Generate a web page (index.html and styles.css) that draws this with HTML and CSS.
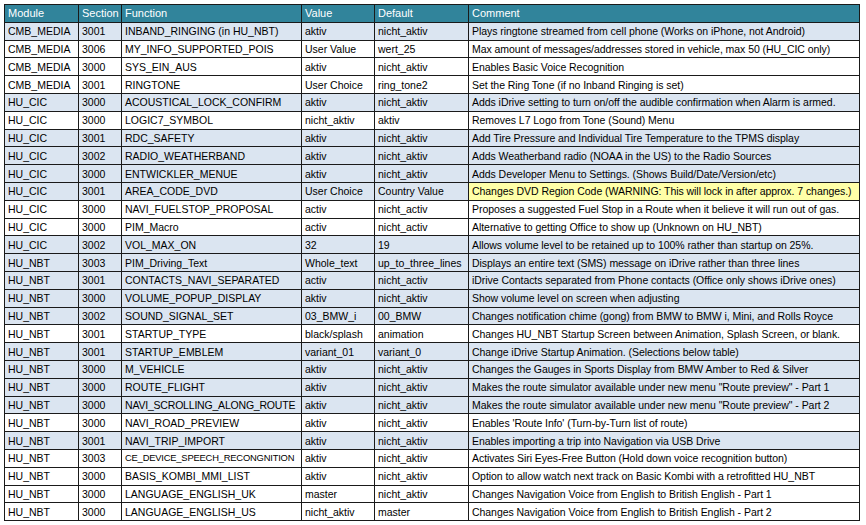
FILE: index.html
```html
<!DOCTYPE html>
<html>
<head>
<meta charset="utf-8">
<link rel="stylesheet" href="styles.css">
</head>
<body>
<table class="codes">
<colgroup>
<col class="c-mod"><col class="c-sec"><col class="c-fn"><col class="c-val"><col class="c-def"><col class="c-com">
</colgroup>
<thead>
<tr><th>Module</th><th>Section</th><th>Function</th><th>Value</th><th>Default</th><th>Comment</th></tr>
</thead>
<tbody>
<tr class="alt"><td>CMB_MEDIA</td><td>3001</td><td>INBAND_RINGING (in HU_NBT)</td><td>aktiv</td><td>nicht_aktiv</td><td>Plays ringtone streamed from cell phone (Works on iPhone, not Android)</td></tr>
<tr><td>CMB_MEDIA</td><td>3006</td><td>MY_INFO_SUPPORTED_POIS</td><td>User Value</td><td>wert_25</td><td>Max amount of messages/addresses stored in vehicle, max 50 (HU_CIC only)</td></tr>
<tr><td>CMB_MEDIA</td><td>3000</td><td>SYS_EIN_AUS</td><td>aktiv</td><td>nicht_aktiv</td><td>Enables Basic Voice Recognition</td></tr>
<tr><td>CMB_MEDIA</td><td>3001</td><td>RINGTONE</td><td>User Choice</td><td>ring_tone2</td><td>Set the Ring Tone (if no Inband Ringing is set)</td></tr>
<tr class="alt"><td>HU_CIC</td><td>3000</td><td>ACOUSTICAL_LOCK_CONFIRM</td><td>aktiv</td><td>nicht_aktiv</td><td>Adds iDrive setting to turn on/off the audible confirmation when Alarm is armed.</td></tr>
<tr><td>HU_CIC</td><td>3000</td><td>LOGIC7_SYMBOL</td><td>nicht_aktiv</td><td>aktiv</td><td>Removes L7 Logo from Tone (Sound) Menu</td></tr>
<tr class="alt"><td>HU_CIC</td><td>3001</td><td>RDC_SAFETY</td><td>aktiv</td><td>nicht_aktiv</td><td>Add Tire Pressure and Individual Tire Temperature to the TPMS display</td></tr>
<tr class="alt"><td>HU_CIC</td><td>3002</td><td>RADIO_WEATHERBAND</td><td>aktiv</td><td>nicht_aktiv</td><td>Adds Weatherband radio (NOAA in the US) to the Radio Sources</td></tr>
<tr class="alt"><td>HU_CIC</td><td>3000</td><td>ENTWICKLER_MENUE</td><td>aktiv</td><td>nicht_aktiv</td><td>Adds Developer Menu to Settings. (Shows Build/Date/Version/etc)</td></tr>
<tr class="alt"><td>HU_CIC</td><td>3001</td><td>AREA_CODE_DVD</td><td>User Choice</td><td>Country Value</td><td class="warn">Changes DVD Region Code (WARNING: This will lock in after approx. 7 changes.)</td></tr>
<tr><td>HU_CIC</td><td>3000</td><td>NAVI_FUELSTOP_PROPOSAL</td><td>activ</td><td>nicht_activ</td><td>Proposes a suggested Fuel Stop in a Route when it believe it will run out of gas.</td></tr>
<tr><td>HU_CIC</td><td>3000</td><td>PIM_Macro</td><td>activ</td><td>nicht_activ</td><td>Alternative to getting Office to show up (Unknown on HU_NBT)</td></tr>
<tr class="alt"><td>HU_CIC</td><td>3002</td><td>VOL_MAX_ON</td><td>32</td><td>19</td><td>Allows volume level to be retained up to 100% rather than startup on 25%.</td></tr>
<tr class="alt"><td>HU_NBT</td><td>3003</td><td>PIM_Driving_Text</td><td>Whole_text</td><td>up_to_three_lines</td><td>Displays an entire text (SMS) message on iDrive rather than three lines</td></tr>
<tr class="alt"><td>HU_NBT</td><td>3001</td><td>CONTACTS_NAVI_SEPARATED</td><td>activ</td><td>nicht_activ</td><td>iDrive Contacts separated from Phone contacts (Office only shows iDrive ones)</td></tr>
<tr class="alt"><td>HU_NBT</td><td>3000</td><td>VOLUME_POPUP_DISPLAY</td><td>aktiv</td><td>nicht_aktiv</td><td>Show volume level on screen when adjusting</td></tr>
<tr class="alt"><td>HU_NBT</td><td>3002</td><td>SOUND_SIGNAL_SET</td><td>03_BMW_i</td><td>00_BMW</td><td>Changes notification chime (gong) from BMW to BMW i, Mini, and Rolls Royce</td></tr>
<tr><td>HU_NBT</td><td>3001</td><td>STARTUP_TYPE</td><td>black/splash</td><td>animation</td><td>Changes HU_NBT Startup Screen between Animation, Splash Screen, or blank.</td></tr>
<tr class="alt"><td>HU_NBT</td><td>3001</td><td>STARTUP_EMBLEM</td><td>variant_01</td><td>variant_0</td><td>Change iDrive Startup Animation. (Selections below table)</td></tr>
<tr class="alt"><td>HU_NBT</td><td>3000</td><td>M_VEHICLE</td><td>aktiv</td><td>nicht_aktiv</td><td>Changes the Gauges in Sports Display from BMW Amber to Red &amp; Silver</td></tr>
<tr class="alt"><td>HU_NBT</td><td>3000</td><td>ROUTE_FLIGHT</td><td>aktiv</td><td>nicht_aktiv</td><td>Makes the route simulator available under new menu "Route preview" - Part 1</td></tr>
<tr class="alt"><td>HU_NBT</td><td>3000</td><td class="snug">NAVI_SCROLLING_ALONG_ROUTE</td><td>aktiv</td><td>nicht_aktiv</td><td>Makes the route simulator available under new menu "Route preview" - Part 2</td></tr>
<tr><td>HU_NBT</td><td>3000</td><td>NAVI_ROAD_PREVIEW</td><td>aktiv</td><td>nicht_aktiv</td><td>Enables 'Route Info' (Turn-by-Turn list of route)</td></tr>
<tr class="alt"><td>HU_NBT</td><td>3001</td><td>NAVI_TRIP_IMPORT</td><td>aktiv</td><td>nicht_aktiv</td><td>Enables importing a trip into Navigation via USB Drive</td></tr>
<tr><td>HU_NBT</td><td>3003</td><td class="tight">CE_DEVICE_SPEECH_RECONGNITION</td><td>aktiv</td><td>nicht_aktiv</td><td>Activates Siri Eyes-Free Button (Hold down voice recognition button)</td></tr>
<tr><td>HU_NBT</td><td>3000</td><td>BASIS_KOMBI_MMI_LIST</td><td>aktiv</td><td>nicht_aktiv</td><td>Option to allow watch next track on Basic Kombi with a retrofitted HU_NBT</td></tr>
<tr><td>HU_NBT</td><td>3000</td><td>LANGUAGE_ENGLISH_UK</td><td>master</td><td>nicht_aktiv</td><td>Changes Navigation Voice from English to British English - Part 1</td></tr>
<tr><td>HU_NBT</td><td>3000</td><td>LANGUAGE_ENGLISH_US</td><td>nicht_aktiv</td><td>master</td><td>Changes Navigation Voice from English to British English - Part 2</td></tr>
</tbody>
</table>
</body>
</html>
```

FILE: styles.css
```css
html, body {
  margin: 0;
  padding: 0;
  background: #ffffff;
}
body {
  font-family: "Liberation Sans", Arial, sans-serif;
  font-size: 10.5px;
  color: #000;
  overflow: hidden;
}
.codes {
  margin: 4px 0 0 4px;
  border-collapse: collapse;
  table-layout: fixed;
  width: 855px;
}
.c-mod { width: 74px; }
.c-sec { width: 43px; }
.c-fn  { width: 180px; }
.c-val { width: 73px; }
.c-def { width: 94px; }
.c-com { width: 391px; }
.codes tr { height: 17.8px; }
.codes th, .codes td {
  border: 1px solid #1a1a1a;
  padding: 0 0 0 3px;
  white-space: nowrap;
  overflow: hidden;
  text-align: left;
  vertical-align: middle;
  font-weight: normal;
  line-height: 12px;
}
.codes th {
  background: #31849b;
  color: #ffffff;
  font-size: 11px;
}
.codes td:last-child { letter-spacing: -0.05px; }
.codes tr.alt td { background: #dbe5f1; }
.codes tr.alt td.warn, .codes td.warn { background: #ffffa8; }
.codes td.snug { letter-spacing: -0.2px; }
.codes td.tight { font-size: 9.4px; letter-spacing: -0.2px; }
```
